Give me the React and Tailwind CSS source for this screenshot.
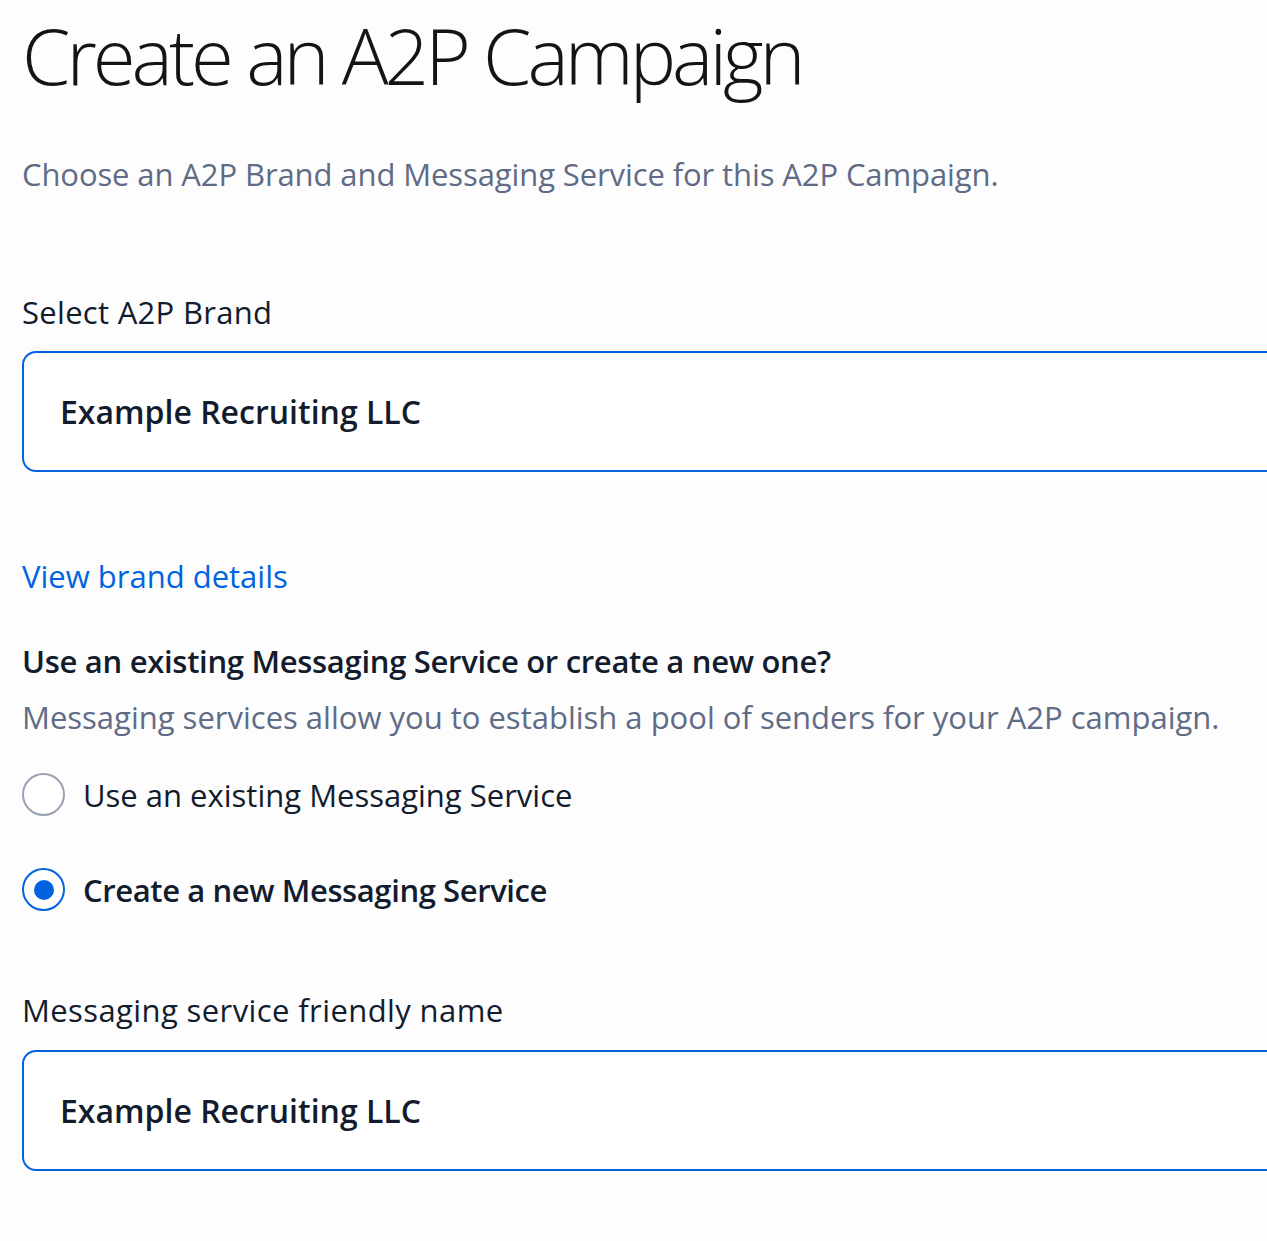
import React, { useState } from "react";

const font = { fontFamily: '"Open Sans", "Noto Sans", sans-serif' };

const Radio = ({ checked, label, onClick }) => (
	<button type="button" onClick={onClick} className="flex items-center gap-[18px] text-left">
		<span
			className={`flex h-[43px] w-[43px] shrink-0 items-center justify-center rounded-full border-2 bg-white ${
				checked ? "border-[#0263e0]" : "border-[#9aa1b3]"
			}`}>
			{checked && <span className="h-[20px] w-[20px] rounded-full bg-[#0263e0]" />}
		</span>
		<span
			className={`text-[31px] leading-[40px] text-[#121c2d] ${
				checked ? "font-semibold tracking-[-0.4px]" : ""
			}`}>
			{label}
		</span>
	</button>
);

const Field = ({ value }) => (
	<div className="flex h-[121px] w-[1320px] items-center rounded-[14px] border-2 border-[#0263e0] bg-white pl-[36px]">
		<span className="text-[32px] font-semibold text-[#121c2d]">{value}</span>
	</div>
);

export default function App() {
	const [mode, setMode] = useState("new");

	return (
		<div className="h-[1241px] w-full overflow-hidden bg-[#fdfdfe] pl-[22px]" style={font}>
			<h1 className="pt-[15px] text-[78px] leading-[80px] font-light tracking-[-4px] text-[#141414]">
				Create an A2P Campaign
			</h1>
			<p className="mt-[59px] text-[31px] leading-[40px] tracking-[-0.1px] text-[#606b85]">
				Choose an A2P Brand and Messaging Service for this A2P Campaign.
			</p>

			<div className="mt-[98px] text-[31px] leading-[40px] tracking-[0.3px] text-[#121c2d]">Select A2P Brand</div>
			<div className="mt-[19px]">
				<Field value="Example Recruiting LLC" />
			</div>

			<a href="#" className="mt-[84px] block text-[31px] leading-[40px] text-[#0263e0]">
				View brand details
			</a>

			<div className="mt-[45px] text-[31px] leading-[40px] font-semibold tracking-[-0.3px] text-[#121c2d]">
				Use an existing Messaging Service or create a new one?
			</div>
			<p className="mt-[16px] text-[31px] leading-[40px] text-[#606b85]">
				Messaging services allow you to establish a pool of senders for your A2P campaign.
			</p>

			<div className="mt-[36px] flex flex-col gap-[52px]">
				<Radio
					label="Use an existing Messaging Service"
					checked={mode === "existing"}
					onClick={() => setMode("existing")}
				/>
				<Radio
					label="Create a new Messaging Service"
					checked={mode === "new"}
					onClick={() => setMode("new")}
				/>
			</div>

			<div className="mt-[79px] text-[31px] leading-[40px] tracking-[0.4px] text-[#121c2d]">
				Messaging service friendly name
			</div>
			<div className="mt-[20px]">
				<Field value="Example Recruiting LLC" />
			</div>
		</div>
	);
}
